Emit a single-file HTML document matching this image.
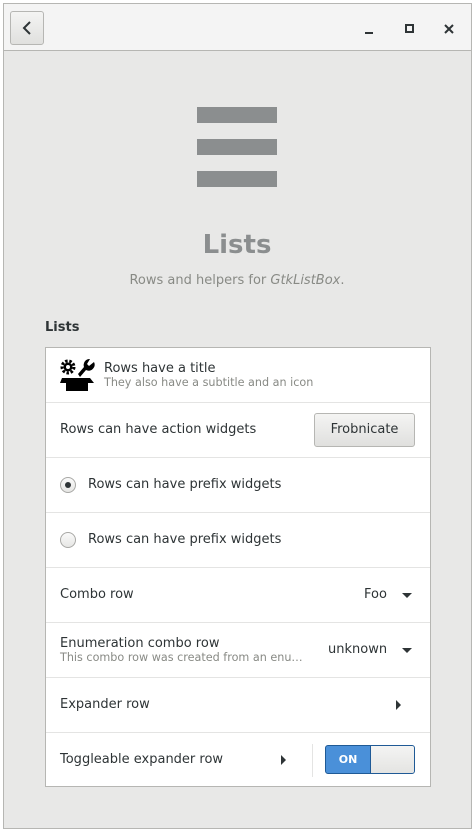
<!DOCTYPE html>
<html><head><meta charset="utf-8"><style>
*{box-sizing:border-box;margin:0;padding:0}
body{width:476px;height:832px;background:#fff;font-family:"DejaVu Sans","Liberation Sans",sans-serif;font-size:13px;color:#2e3436;position:relative;overflow:hidden}
.win{position:absolute;left:3px;top:3px;width:469px;height:826px;border:1px solid #b6b6b3;background:#e8e8e7}
.hb{position:absolute;left:0;top:0;width:467px;height:47px;background:#f4f4f4;border-bottom:1px solid #b6b6b3}
.back{position:absolute;left:6px;top:7px;width:34px;height:34px;border:1px solid #b6b6b3;border-radius:3px;background:linear-gradient(#f4f4f3,#e0e0de)}
.abs{position:absolute}
.bar{position:absolute;left:193px;width:80px;height:16px;background:#8b8e8f}
.list{position:absolute;left:41px;top:343px;width:386px;height:440px;background:#fff;border:1px solid #b6b6b3}
.row{position:absolute;left:0;width:384px;height:55px;border-bottom:1px solid #e4e4e3}
.t{position:absolute;font-size:13px;color:#2e3436;white-space:nowrap}
.s{position:absolute;font-size:11px;color:#888a85;white-space:nowrap}
.radio{position:absolute;left:14px;top:19px;width:16px;height:16px;border-radius:50%;border:1px solid #a8a8a5;background:linear-gradient(#fafafa,#e6e6e4)}
.dd{position:absolute;width:0;height:0;border-left:5px solid transparent;border-right:5px solid transparent;border-top:5px solid #2e3436}
.ar{position:absolute;width:0;height:0;border-top:5px solid transparent;border-bottom:5px solid transparent;border-left:5px solid #2e3436}
</style></head><body>
<div class="win">
 <div class="hb">
  <div class="back"><svg width="34" height="34" class="abs" style="left:-1px;top:-1px"><path d="M20 11 L14 17 L20 23" stroke="#2e3436" stroke-width="2" fill="none"/></svg></div>
  <div class="abs" style="left:361px;top:28px;width:8px;height:2px;background:#2e3436"></div>
  <div class="abs" style="left:401px;top:20px;width:9px;height:9px;border:2px solid #2e3436"></div>
  <svg class="abs" style="left:440px;top:20px" width="10" height="10"><path d="M1 1L9 9M9 1L1 9" stroke="#2e3436" stroke-width="2"/></svg>
 </div>
 <div class="bar" style="top:103px"></div>
 <div class="bar" style="top:135px"></div>
 <div class="bar" style="top:167px"></div>
 <div class="abs" style="left:0;width:466px;top:226px;text-align:center;font-size:26px;font-weight:bold;color:#8b8e8f">Lists</div>
 <div class="abs" style="left:0;width:466px;top:269px;text-align:center;font-size:13px;color:#888a85">Rows and helpers for <i>GtkListBox</i>.</div>
 <div class="abs" style="left:41px;top:316px;font-weight:bold;font-size:13px">Lists</div>
 <div class="list">
  <div class="row" style="top:0">
   <svg class="abs" style="left:13px;top:10px" width="36" height="34"><circle cx="9" cy="9" r="6" fill="none" stroke="#000" stroke-width="3" stroke-dasharray="2.5 1.7"/><circle cx="9" cy="9" r="4.5" fill="#000"/><circle cx="9" cy="9" r="2" fill="#fff"/><path d="M19 16 L25 9 A6 6 0 0 1 31 1 L28 6 L30 8 L35 4 A6 6 0 0 1 27 12 L21 19Z" fill="#000"/><path d="M3 20 L31 20 L35 25 L29 25 L29 33 L7 33 L7 25 L1 25Z" fill="#000"/></svg>
   <div class="t" style="left:58px;top:13px">Rows have a title</div>
   <div class="s" style="left:58px;top:28px;font-size:11.2px">They also have a subtitle and an icon</div>
  </div>
  <div class="row" style="top:55px">
   <div class="t" style="left:14px;top:19px">Rows can have action widgets</div>
   <div class="abs" style="left:268px;top:10px;width:101px;height:34px;border:1px solid #b6b6b3;border-radius:3px;background:linear-gradient(#f4f4f3,#e0e0de);text-align:center;line-height:32px;font-size:13px">Frobnicate</div>
  </div>
  <div class="row" style="top:110px">
   <div class="radio"><div class="abs" style="left:4px;top:4px;width:6px;height:6px;border-radius:50%;background:#2e3436"></div></div>
   <div class="t" style="left:42px;top:19px">Rows can have prefix widgets</div>
  </div>
  <div class="row" style="top:165px">
   <div class="radio"></div>
   <div class="t" style="left:42px;top:19px">Rows can have prefix widgets</div>
  </div>
  <div class="row" style="top:220px">
   <div class="t" style="left:14px;top:19px">Combo row</div>
   <div class="t" style="left:318px;top:19px">Foo</div>
   <div class="dd" style="left:356px;top:25px"></div>
  </div>
  <div class="row" style="top:275px">
   <div class="t" style="left:14px;top:13px">Enumeration combo row</div>
   <div class="s" style="left:14px;top:28px;font-size:11.2px">This combo row was created from an enu…</div>
   <div class="t" style="left:282px;top:19px">unknown</div>
   <div class="dd" style="left:356px;top:25px"></div>
  </div>
  <div class="row" style="top:330px">
   <div class="t" style="left:14px;top:19px">Expander row</div>
   <div class="ar" style="left:350px;top:22px"></div>
  </div>
  <div class="row" style="top:385px;border-bottom:none">
   <div class="t" style="left:14px;top:19px">Toggleable expander row</div>
   <div class="ar" style="left:235px;top:22px"></div>
   <div class="abs" style="left:266px;top:11px;width:1px;height:33px;background:#e4e4e3"></div>
   <div class="abs" style="left:279px;top:12px;width:90px;height:29px;border:1px solid #1f5a96;border-radius:3px;background:#4a90d9;overflow:hidden">
    <div class="abs" style="left:0;top:0;width:44px;height:27px;color:#fff;font-weight:bold;font-size:11px;text-align:center;line-height:27px">ON</div>
    <div class="abs" style="left:44px;top:0;width:45px;height:27px;background:linear-gradient(#f4f4f3,#e4e4e2);border-left:1px solid #1f5a96;border-radius:0 2px 2px 0"></div>
   </div>
  </div>
 </div>
</div>
</body></html>
